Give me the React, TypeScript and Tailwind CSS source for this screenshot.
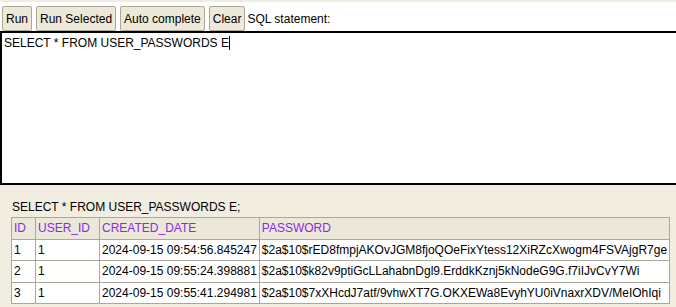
const rows = [
  { id: "1", userId: "1", created: "2024-09-15 09:54:56.845247", password: "$2a$10$rED8fmpjAKOvJGM8fjoQOeFixYtess12XiRZcXwogm4FSVAjgR7ge" },
  { id: "2", userId: "1", created: "2024-09-15 09:55:24.398881", password: "$2a$10$k82v9ptiGcLLahabnDgl9.ErddkKznj5kNodeG9G.f7iIJvCvY7Wi" },
  { id: "3", userId: "1", created: "2024-09-15 09:55:41.294981", password: "$2a$10$7xXHcdJ7atf/9vhwXT7G.OKXEWa8EvyhYU0iVnaxrXDV/MeIOhIqi" },
];

const Button = ({ label }: { label: string }) => (
  <button className="h-[25px] px-[3px] border border-[#aca899] rounded-[2px] bg-[#ece9d8] text-[12px] text-black leading-none">
    {label}
  </button>
);

const headers = ["ID", "USER_ID", "CREATED_DATE", "PASSWORD"];

export default function App() {
  return (
    <div className="w-[676px] h-[307px] overflow-hidden bg-[#f1eee1] font-['Liberation_Sans',Arial,sans-serif] text-black">
      <div className="h-[2px]" />
      {/* toolbar */}
      <div className="bg-white flex items-center gap-[4px] pl-[2px] pt-[4px] h-[29px]">
        <Button label="Run" />
        <Button label="Run Selected" />
        <Button label="Auto complete" />
        <Button label="Clear" />
        <span className="text-[12px] ml-[-2px]">SQL statement:</span>
      </div>
      {/* editor */}
      <div className="w-[700px] h-[154px] bg-white border-2 border-black px-[2px] pt-[3px] text-[12px] leading-[14px]">
        <span>SELECT * FROM USER_PASSWORDS E</span>
        <span className="inline-block w-px h-[14px] bg-black align-[-3px]" />
      </div>
      {/* result */}
      <div className="pl-[11px] pt-[14px]">
        <div className="text-[12px] leading-[16px] pl-px mb-[2px]">SELECT * FROM USER_PASSWORDS E;</div>
        <table className="border-collapse text-[12px] leading-[14.5px] whitespace-nowrap">
          <thead>
            <tr className="bg-[#ebe8da] text-[#8a2be2]">
              {headers.map((h) => (
                <th key={h} className="border border-[#aca899] pl-[2px] pr-[9px] py-[3px] text-left font-normal">
                  {h}
                </th>
              ))}
            </tr>
          </thead>
          <tbody>
            {rows.map((r) => (
              <tr key={r.id} className="bg-white">
                <td className="border border-[#aca899] px-[2px] py-[3px]">{r.id}</td>
                <td className="border border-[#aca899] px-[2px] py-[3px]">{r.userId}</td>
                <td className="border border-[#aca899] px-[2px] py-[3px]">{r.created}</td>
                <td className="border border-[#aca899] px-[2px] py-[3px]">{r.password}</td>
              </tr>
            ))}
          </tbody>
        </table>
      </div>
    </div>
  );
}
